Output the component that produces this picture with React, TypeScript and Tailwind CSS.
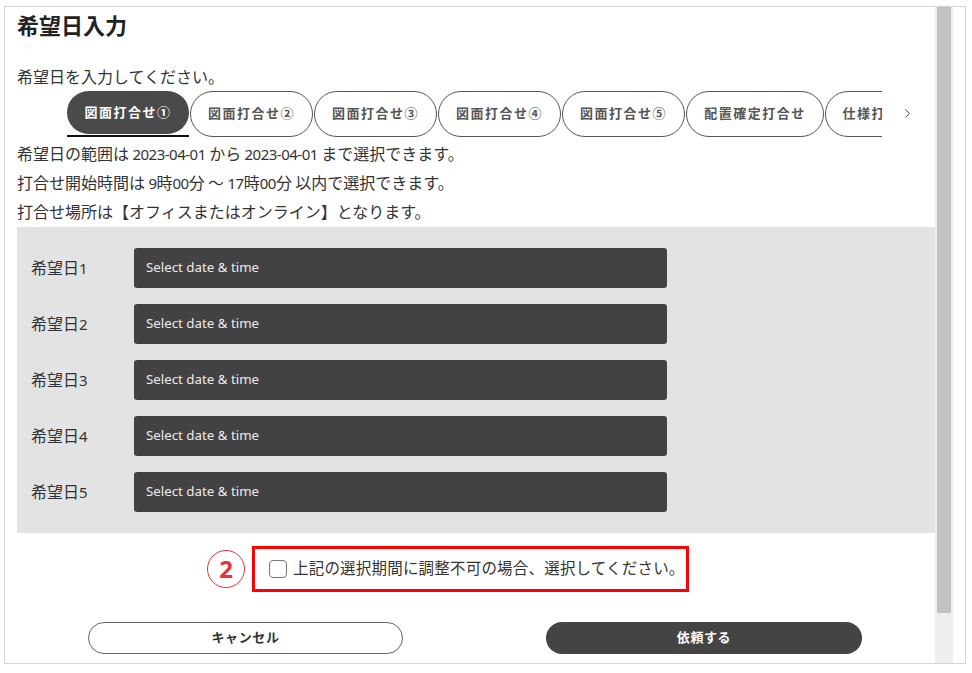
import type { ReactNode } from "react";
import { ChevronRight } from "lucide-react";

const FONT = { fontFamily: '"Noto Sans", "Noto Sans CJK JP", sans-serif' };

const tabs = [
  { label: "図面打合せ①", w: "w-[122px]" },
  { label: "図面打合せ②", w: "w-[123px]" },
  { label: "図面打合せ③", w: "w-[123px]" },
  { label: "図面打合せ④", w: "w-[123px]" },
  { label: "図面打合せ⑤", w: "w-[123px]" },
  { label: "配置確定打合せ", w: "w-[138px]" },
  { label: "仕様打合せ①", w: "w-[122px]" },
];

// latin runs are a touch tighter than the kana, as in the screenshot
const L = ({ children }: { children: ReactNode }) => (
  <span className="text-[15px] tracking-[-0.5px]">{children}</span>
);

const TabBar = () => (
  <div className="flex items-start ml-[50px] mt-[2px]">
    <div className="w-[815px] overflow-hidden">
      <div className="flex gap-[1px] w-max">
        {tabs.map((t, i) =>
          i === 0 ? (
            <div key={t.label} className="flex flex-col">
              <div
                className={`${t.w} h-[43px] rounded-full flex items-center justify-center bg-[#4a4a4a] text-white text-[13px] font-bold tracking-[1.5px] whitespace-nowrap`}
              >
                {t.label}
              </div>
              <div className="mt-[1px] h-[2px] bg-[#111]" />
            </div>
          ) : (
            <div
              key={t.label}
              className={`${t.w} h-[46px] rounded-full border border-[#555] bg-white text-[#555] flex items-center justify-center text-[13px] font-bold tracking-[1.5px] whitespace-nowrap`}
            >
              {t.label}
            </div>
          )
        )}
      </div>
    </div>
    <div className="w-[50px] h-[44px] flex items-center justify-center text-[#444]">
      <ChevronRight size={15} strokeWidth={1.6} />
    </div>
  </div>
);

const DateRow = ({ n }: { n: number }) => (
  <div className="flex items-center h-[40px]">
    <div className="w-[103px] text-[16px] text-[#333]">
      希望日<L>{n}</L>
    </div>
    <div className="w-[533px] h-[40px] rounded-[3px] bg-[#424242] flex items-center pl-[12px] text-[13.3px] text-[#ececec]">
      Select date &amp; time
    </div>
  </div>
);

export default function App() {
  return (
    <div className="w-[972px] h-[673px] bg-white pt-[6px] pl-[4px]" style={FONT}>
      <div className="w-[962px] h-[658px] border border-[#d4d4d4] flex overflow-hidden">
        <div className="w-[930px] pl-[12px] overflow-hidden">
          <h1 className="pt-[4px] text-[22px] leading-[28px] font-bold text-[#222]">希望日入力</h1>
          <p className="mt-[26px] text-[16px] leading-[24px] text-[#333]">希望日を入力してください。</p>

          <TabBar />

          <div className="mt-[3px] text-[16px] leading-[29px] text-[#333]">
            <p>
              希望日の範囲は<L> 2023-04-01 </L>から<L> 2023-04-01 </L>まで選択できます。
            </p>
            <p>
              打合せ開始時間は<L> 9</L>時<L>00</L>分<L> </L>〜<L> 17</L>時<L>00</L>分<L> </L>以内で選択できます。
            </p>
            <p>打合せ場所は【オフィスまたはオンライン】となります。</p>
          </div>

          <div className="bg-[#e3e3e3] pl-[14px] py-[21px] flex flex-col gap-[16px]">
            {[1, 2, 3, 4, 5].map((n) => (
              <DateRow key={n} n={n} />
            ))}
          </div>

          <div className="flex items-center mt-[13px] ml-[190px]">
            <div className="w-[38px] h-[38px] rounded-full border-[1.5px] border-[#e8323c] flex items-center justify-center text-[#e8323c] text-[24px] font-bold leading-none">
              2
            </div>
            <div className="ml-[7px] w-[437px] h-[46px] border-[3px] border-[#ff0000] flex items-center pl-[14px]">
              <span className="w-[18px] h-[18px] rounded-[4px] border-[1.5px] border-[#777] bg-white" />
              <span className="ml-[6px] text-[15.5px] tracking-[0.2px] text-[#333] whitespace-nowrap">
                上記の選択期間に調整不可の場合、選択してください。
              </span>
            </div>
          </div>

          <div className="flex mt-[30px] ml-[71px] gap-[143px]">
            <button className="w-[315px] h-[32px] rounded-full border border-[#666] bg-white text-[13px] font-bold tracking-[0.6px] text-[#333]">
              キャンセル
            </button>
            <button className="w-[316px] h-[32px] rounded-full bg-[#444] text-[13px] font-bold tracking-[0.6px] text-white">
              依頼する
            </button>
          </div>
        </div>

        <div className="w-[18px] h-full bg-[#efefef] px-[2px]">
          <div className="h-[606px] bg-[#c1c1c1]" />
        </div>
      </div>
    </div>
  );
}
